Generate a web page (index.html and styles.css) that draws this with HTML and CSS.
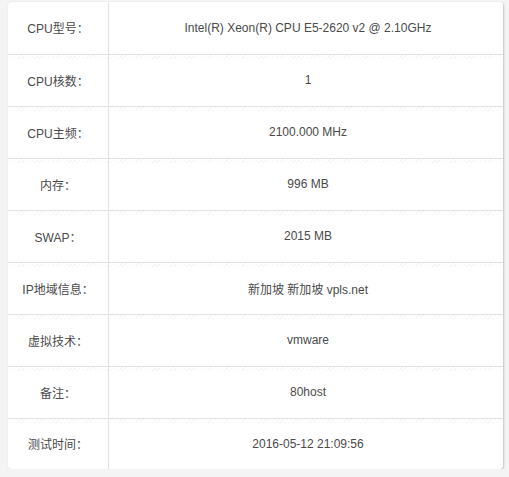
FILE: index.html
```html
<!DOCTYPE html>
<html lang="zh">
<head>
<meta charset="utf-8">
<link rel="stylesheet" href="styles.css">
</head>
<body>
<div class="card">
  <table class="info">
    <tr><th>CPU型号：</th><td>Intel(R) Xeon(R) CPU E5-2620 v2 @ 2.10GHz</td></tr>
    <tr><th>CPU核数：</th><td>1</td></tr>
    <tr><th>CPU主频：</th><td>2100.000 MHz</td></tr>
    <tr><th>内存：</th><td>996 MB</td></tr>
    <tr><th>SWAP：</th><td>2015 MB</td></tr>
    <tr><th>IP地域信息：</th><td>新加坡 新加坡 vpls.net</td></tr>
    <tr><th>虚拟技术：</th><td>vmware</td></tr>
    <tr><th>备注：</th><td>80host</td></tr>
    <tr><th>测试时间：</th><td>2016-05-12 21:09:56</td></tr>
  </table>
</div>
</body>
</html>
```

FILE: styles.css
```css
html, body {
  margin: 0;
  padding: 0;
  background: #f4f4f4;
}
body {
  padding: 2px 6px 0 8px;
  font-family: "Liberation Sans", Arial, "Noto Sans CJK SC", sans-serif;
  font-size: 12px;
  color: #4a4a4a;
}
.card {
  width: 495px;
  background: #fff;
  border-radius: 3px;
  box-shadow: 1px 1px 2px rgba(0,0,0,0.18), 0 0 1px rgba(0,0,0,0.12);
  overflow: hidden;
}
.info {
  width: 100%;
  border-collapse: collapse;
}
.info tr {
  height: 52px;
}
.info tr + tr th,
.info tr + tr td {
  border-top: 1px solid #e2e2e2;
  background-image: repeating-linear-gradient(135deg, #f6f6f6 0 1px, #fff 1px 3px);
  background-size: 100% 4px;
  background-repeat: no-repeat;
}
.info th {
  width: 100px;
  font-weight: normal;
  text-align: center;
  border-right: 1px solid #e2e2e2;
  padding: 0;
}
.info td {
  text-align: center;
  padding: 0 0 0 4px;
}
.info tr:last-child {
  height: 51px;
}
```
